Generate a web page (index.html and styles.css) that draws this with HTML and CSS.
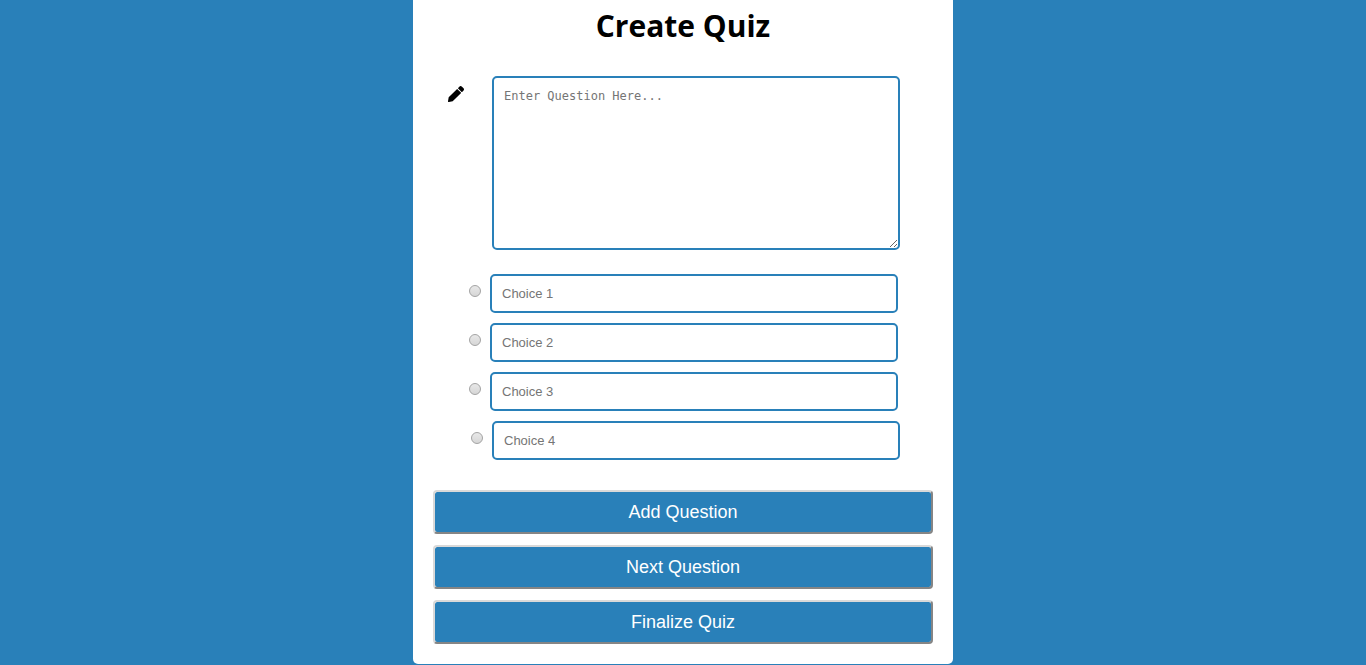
FILE: index.html
```html
<!DOCTYPE html>
<html lang="en">
<head>
<meta charset="utf-8">
<meta name="viewport" content="width=device-width, initial-scale=1">
<title>Create Quiz</title>
<link rel="stylesheet" href="styles.css">
</head>
<body>
<main class="card">
  <h1 class="title">Create Quiz</h1>
  <form class="quiz">
    <div class="question">
      <label class="question-label" for="question" aria-label="Question">
        <svg class="pencil" viewBox="0 0 512 512" aria-hidden="true"><path d="M498 142l-46 46c-5 5-13 5-17 0L324 77c-5-5-5-12 0-17l46-46c19-19 49-19 68 0l60 60c19 19 19 49 0 68zm-214-42L22 362 0 484c-3 16 12 30 28 28l122-22 262-262c5-5 5-13 0-17L301 100c-4-5-12-5-17 0z"/></svg>
      </label>
      <textarea class="field question-text" id="question" placeholder="Enter Question Here..."></textarea>
    </div>
    <div class="choices">
      <div class="choice">
        <input class="radio" type="radio" name="answer" aria-label="Choice 1 is correct">
        <input class="field" type="text" placeholder="Choice 1" aria-label="Choice 1">
      </div>
      <div class="choice">
        <input class="radio" type="radio" name="answer" aria-label="Choice 2 is correct">
        <input class="field" type="text" placeholder="Choice 2" aria-label="Choice 2">
      </div>
      <div class="choice">
        <input class="radio" type="radio" name="answer" aria-label="Choice 3 is correct">
        <input class="field" type="text" placeholder="Choice 3" aria-label="Choice 3">
      </div>
      <div class="choice choice-last">
        <input class="radio" type="radio" name="answer" aria-label="Choice 4 is correct">
        <input class="field" type="text" placeholder="Choice 4" aria-label="Choice 4">
      </div>
    </div>
    <div class="actions">
      <button class="action" type="button">Add Question</button>
      <button class="action" type="button">Next Question</button>
      <button class="action" type="button">Finalize Quiz</button>
    </div>
  </form>
</main>
</body>
</html>
```
FILE: styles.css
```css
* {
  box-sizing: border-box;
}

body {
  margin: 0;
  background: #2980b9;
  font-family: "Segoe UI", "Open Sans", sans-serif;
}

.card {
  max-width: 540px;
  margin: 0 auto;
  padding: 4px 20px 20px;
  background: #fff;
  border-radius: 0 0 5px 5px;
}

.title {
  margin: 0 0 28px;
  font-size: 30px;
  line-height: 44px;
  font-weight: 700;
  text-align: center;
}

.question {
  display: flex;
  align-items: flex-start;
  padding: 0 33px 0 15px;
}

.question-label {
  flex: none;
  width: 44px;
  padding-top: 10px;
}

.pencil {
  display: block;
  width: 16px;
  height: 16px;
}

.field {
  flex: 1;
  min-width: 0;
  height: 39px;
  margin: 0;
  padding: 10px;
  border: 2px solid #2980b9;
  border-radius: 5px;
  background: #fff;
  font: 13px/16px "Liberation Sans", Arial, sans-serif;
}

.field::placeholder {
  color: #757575;
}

.question-text {
  height: 174px;
  font: 12px/16px "DejaVu Sans Mono", monospace;
  resize: both;
}

.choices {
  display: flex;
  flex-direction: column;
  gap: 10px;
  padding: 24px 35px 30px 36px;
}

.choice {
  display: flex;
  align-items: flex-start;
  gap: 9px;
}

.choice-last {
  margin: 0 -2px 0 2px;
}

.radio {
  appearance: none;
  flex: none;
  width: 12px;
  height: 12px;
  margin: 11px 0 0;
  border: 1px solid #a3a3a3;
  border-radius: 50%;
  background: linear-gradient(#e8e8e8, #d6d6d6);
}

.radio:checked {
  background: radial-gradient(#444 35%, #e0e0e0 40%);
}

.actions {
  display: flex;
  flex-direction: column;
  gap: 11px;
}

.action {
  height: 44px;
  padding: 0 10px;
  border: 2px solid;
  border-color: #d9d9d9 #858585 #858585 #d9d9d9;
  border-radius: 4px;
  background: #2980b9;
  background-clip: padding-box;
  color: #fff;
  font: 18px/20px "Liberation Sans", Arial, sans-serif;
  cursor: pointer;
}
```
